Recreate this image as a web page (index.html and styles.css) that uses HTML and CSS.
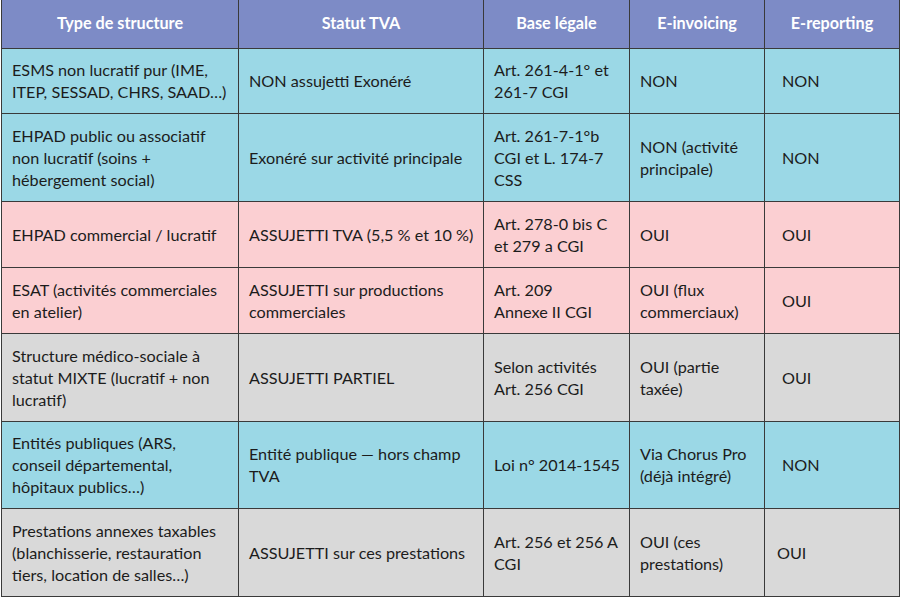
FILE: index.html
```html
<!DOCTYPE html>
<html lang="fr">
<head>
<meta charset="utf-8">
<title>Statut TVA</title>
<link rel="stylesheet" href="styles.css">
</head>
<body>
<table class="grid">
  <colgroup>
    <col class="c1"><col class="c2"><col class="c3"><col class="c4"><col class="c5">
  </colgroup>
  <thead>
    <tr class="head">
      <th>Type de structure</th>
      <th>Statut TVA</th>
      <th>Base légale</th>
      <th>E-invoicing</th>
      <th>E-reporting</th>
    </tr>
  </thead>
  <tbody>
    <tr class="cyan h65">
      <td>ESMS non lucratif pur (IME,<br>ITEP, SESSAD, CHRS, SAAD…)</td>
      <td>NON assujetti Exonéré</td>
      <td>Art. 261-4-1° et<br>261-7 CGI</td>
      <td>NON</td>
      <td class="last">NON</td>
    </tr>
    <tr class="cyan h88">
      <td>EHPAD public ou associatif<br>non lucratif (soins +<br>hébergement social)</td>
      <td>Exonéré sur activité principale</td>
      <td>Art. 261-7-1°b<br>CGI et L. 174-7<br>CSS</td>
      <td>NON (activité<br>principale)</td>
      <td class="last">NON</td>
    </tr>
    <tr class="pink h66">
      <td>EHPAD commercial / lucratif</td>
      <td>ASSUJETTI TVA (5,5 % et 10 %)</td>
      <td>Art. 278-0 bis C<br>et 279 a CGI</td>
      <td>OUI</td>
      <td class="last">OUI</td>
    </tr>
    <tr class="pink h66">
      <td>ESAT (activités commerciales<br>en atelier)</td>
      <td>ASSUJETTI sur productions<br>commerciales</td>
      <td>Art. 209<br>Annexe II CGI</td>
      <td>OUI (flux<br>commerciaux)</td>
      <td class="last">OUI</td>
    </tr>
    <tr class="gray h88">
      <td>Structure médico-sociale à<br>statut MIXTE (lucratif + non<br>lucratif)</td>
      <td>ASSUJETTI PARTIEL</td>
      <td>Selon activités<br>Art. 256 CGI</td>
      <td>OUI (partie<br>taxée)</td>
      <td class="last">OUI</td>
    </tr>
    <tr class="cyan h87">
      <td>Entités publiques (ARS,<br>conseil départemental,<br>hôpitaux publics…)</td>
      <td>Entité publique — hors champ<br>TVA</td>
      <td>Loi n° 2014-1545</td>
      <td>Via Chorus Pro<br>(déjà intégré)</td>
      <td class="last">NON</td>
    </tr>
    <tr class="gray h88">
      <td>Prestations annexes taxables<br>(blanchisserie, restauration<br>tiers, location de salles…)</td>
      <td>ASSUJETTI sur ces prestations</td>
      <td>Art. 256 et 256 A<br>CGI</td>
      <td>OUI (ces<br>prestations)</td>
      <td class="last narrow">OUI</td>
    </tr>
  </tbody>
</table>
</body>
</html>
```
FILE: styles.css
```css
html, body {
  margin: 0;
  padding: 0;
  background: #ffffff;
}
body {
  padding: 0 1px;
  font-family: Lato, "Open Sans", sans-serif;
  font-size: 16.2px;
  color: #1c1c1c;
}
.grid {
  border-collapse: collapse;
  table-layout: fixed;
  width: 898px;
}
.c1 { width: 237px; }
.c2 { width: 245px; }
.c3 { width: 146px; }
.c4 { width: 135px; }
.c5 { width: 135px; }
.grid th, .grid td {
  border: 1px solid #3a3a3a;
  padding: 0 4px 0 10px;
  vertical-align: middle;
  line-height: 22px;
  text-align: left;
  white-space: nowrap;
  overflow: hidden;
}
.grid th {
  background: #7d8bc6;
  color: #ffffff;
  font-weight: 700;
  text-align: center;
  height: 46px;
  padding: 0 0 2px 0;
  border-top: none;
}
.grid td.last { padding-left: 17px; }
.grid td.last.narrow { padding-left: 12px; }
.cyan td { background: #9bd8e6; }
.pink td { background: #fbcfd2; }
.gray td { background: #d9d9d9; }
.h65 td { height: 64px; }
.h66 td { height: 65px; }
.h87 td { height: 86px; }
.h88 td { height: 87px; }
```
